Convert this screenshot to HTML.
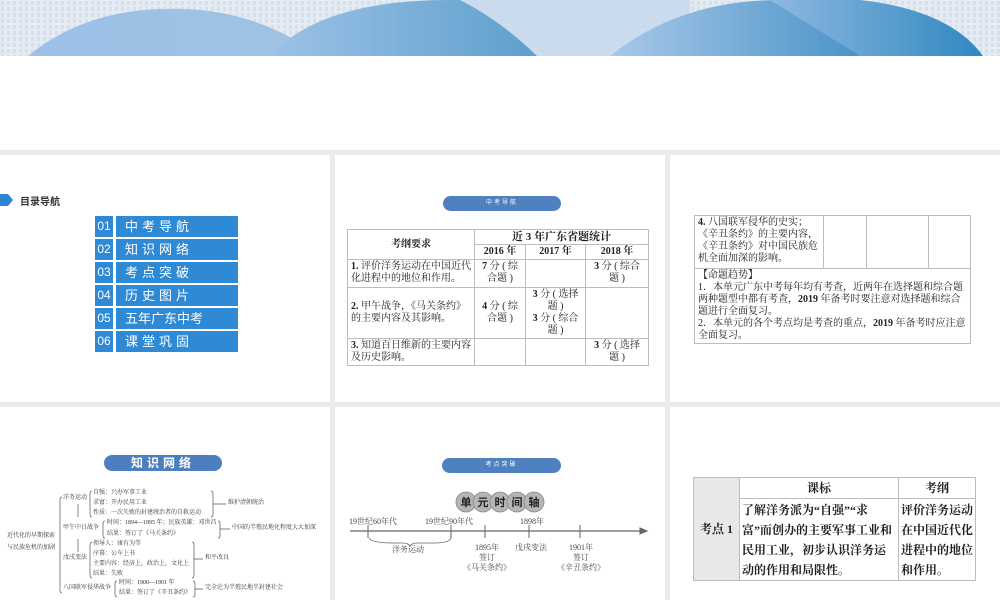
<!DOCTYPE html>
<html><head><meta charset="utf-8"><style>
*{margin:0;padding:0;box-sizing:border-box}
body{width:1000px;height:600px;overflow:hidden;background:#ebebeb;position:relative;font-family:"Liberation Serif","Noto Serif CJK SC",serif;color:#222}
.a{position:absolute}
.s{position:absolute;background:#fff;overflow:hidden}
.ss{font-family:"Liberation Sans","Noto Sans CJK SC",sans-serif}
.pill{position:absolute;background:#4f80bf;border-radius:8px;color:#fff;font-size:6px;text-align:center;font-family:"Liberation Sans","Noto Sans CJK SC",sans-serif;letter-spacing:2px}
table{border-collapse:collapse;table-layout:fixed}
td{border:1px solid #bdbdbd;vertical-align:top}
.t2 td{font-size:10px;line-height:12px;padding:1px 3px}
.t2 td.c{padding:1px 5px;text-align:center}
.mm span{position:absolute;font-size:6px;white-space:nowrap;line-height:7px;color:#333}
.tl{position:absolute;font-size:8px;color:#444;text-align:center;line-height:10px;white-space:nowrap}
</style></head><body>
<div class="a" style="left:0;top:0;width:1000px;height:150px;background:#fff"></div>
<svg class="a" style="left:0;top:0" width="1000" height="56" viewBox="0 0 1000 56">
<defs>
<pattern id="dp" width="6" height="6" patternUnits="userSpaceOnUse"><rect width="6" height="6" fill="#e4ebf3"/><rect x="1" y="1" width="3" height="4" fill="#d6e0ec"/></pattern>
<linearGradient id="g1" x1="0" x2="1"><stop offset="0" stop-color="#9cc0e6"/><stop offset="1" stop-color="#9ec3e4"/></linearGradient>
<linearGradient id="g2" x1="0" x2="1"><stop offset="0" stop-color="#9cc2e6"/><stop offset="1" stop-color="#5f9fcd"/></linearGradient>
<linearGradient id="g3" x1="0" x2="1"><stop offset="0" stop-color="#a9c8e8"/><stop offset="1" stop-color="#4a94c8"/></linearGradient>
<linearGradient id="g4" x1="0" x2="1"><stop offset="0" stop-color="#8fb8e0"/><stop offset="1" stop-color="#2f88c0"/></linearGradient>
</defs>
<rect width="1000" height="56" fill="url(#dp)"/>
<rect x="430" y="0" width="260" height="56" fill="#c5d8ee" opacity="0.8"/>
<path d="M28 56 Q90 5 185 9 Q260 12 320 56Z" fill="url(#g1)"/>
<path d="M270 56 Q320 0 450 0 L460 0 Q500 20 537 56Z" fill="url(#g2)"/>
<path d="M610 56 Q680 0 780 0 L860 56Z" fill="url(#g3)"/>
<path d="M770 0 L860 0 Q950 10 983 56 L860 56Z" fill="url(#g4)"/>
</svg>

<!-- slide 1 -->
<div class="s" style="left:0;top:155px;width:330px;height:247px">
<svg class="a" style="left:0;top:39px" width="14" height="12"><path d="M0 0H8L13 6L8 12H0Z" fill="#2e86d2"/></svg>
<div class="a ss" style="left:20px;top:38px;font-size:10px;font-weight:bold;color:#333">目录导航</div>
<div class="ss" style="position:absolute;left:95px;top:61px;color:#fff;font-size:13px">
<div class="a" style="top:0;left:0;width:18px;height:21px;background:#2f8ad6;line-height:21px;text-align:center;font-size:12px">01</div><div class="a" style="top:0;left:21px;width:122px;height:21px;background:#2f8ad6;line-height:21px;padding-left:9px;letter-spacing:4px">中考导航</div>
<div class="a" style="top:23px;left:0;width:18px;height:21px;background:#2f8ad6;line-height:21px;text-align:center;font-size:12px">02</div><div class="a" style="top:23px;left:21px;width:122px;height:21px;background:#2f8ad6;line-height:21px;padding-left:9px;letter-spacing:4px">知识网络</div>
<div class="a" style="top:46px;left:0;width:18px;height:21px;background:#2f8ad6;line-height:21px;text-align:center;font-size:12px">03</div><div class="a" style="top:46px;left:21px;width:122px;height:21px;background:#2f8ad6;line-height:21px;padding-left:9px;letter-spacing:4px">考点突破</div>
<div class="a" style="top:69px;left:0;width:18px;height:21px;background:#2f8ad6;line-height:21px;text-align:center;font-size:12px">04</div><div class="a" style="top:69px;left:21px;width:122px;height:21px;background:#2f8ad6;line-height:21px;padding-left:9px;letter-spacing:4px">历史图片</div>
<div class="a" style="top:92px;left:0;width:18px;height:21px;background:#2f8ad6;line-height:21px;text-align:center;font-size:12px">05</div><div class="a" style="top:92px;left:21px;width:122px;height:21px;background:#2f8ad6;line-height:21px;padding-left:9px">五年广东中考</div>
<div class="a" style="top:115px;left:0;width:18px;height:21px;background:#2f8ad6;line-height:21px;text-align:center;font-size:12px">06</div><div class="a" style="top:115px;left:21px;width:122px;height:21px;background:#2f8ad6;line-height:21px;padding-left:9px;letter-spacing:4px">课堂巩固</div>
</div>
</div>

<!-- slide 2 -->
<div class="s" style="left:335px;top:155px;width:330px;height:247px">
<div class="pill" style="left:108px;top:41px;width:118px;height:15px;line-height:15px">中考导航</div>
<table class="t2 a" style="left:12px;top:74px;width:302px">
<colgroup><col style="width:127px"><col style="width:51px"><col style="width:60px"><col></colgroup>
<tr style="height:14px"><td rowspan="2" style="text-align:center;vertical-align:middle;font-weight:bold">考纲要求</td><td colspan="3" style="text-align:center;font-weight:bold;font-size:11px">近 3 年广东省题统计</td></tr>
<tr style="height:15px"><td style="text-align:center;font-weight:bold">2016 年</td><td style="text-align:center;font-weight:bold">2017 年</td><td style="text-align:center;font-weight:bold">2018 年</td></tr>
<tr style="height:28px"><td><b>1.</b> 评价洋务运动在中国近代化进程中的地位和作用。</td><td class="c"><b>7</b> 分 ( 综合题 )</td><td></td><td class="c"><b>3</b> 分 ( 综合题 )</td></tr>
<tr style="height:50px"><td style="vertical-align:middle"><b>2.</b> 甲午战争，《马关条约》的主要内容及其影响。</td><td class="c" style="vertical-align:middle"><b>4</b> 分 ( 综合题 )</td><td class="c"><b>3</b> 分 ( 选择题 )<br><b>3</b> 分 ( 综合题 )</td><td></td></tr>
<tr style="height:27px"><td><b>3.</b> 知道百日维新的主要内容及历史影响。</td><td></td><td></td><td class="c"><b>3</b> 分 ( 选择题 )</td></tr>
</table>
</div>

<!-- slide 3 -->
<div class="s" style="left:670px;top:155px;width:330px;height:247px">
<table class="t2 a" style="left:24px;top:60px;width:277px">
<colgroup><col style="width:129px"><col style="width:43px"><col style="width:62px"><col></colgroup>
<tr style="height:53px"><td><b>4.</b> 八国联军侵华的史实；《辛丑条约》的主要内容，《辛丑条约》对中国民族危机全面加深的影响。</td><td></td><td></td><td></td></tr>
<tr style="height:75px"><td colspan="4">【命题趋势】<br>1．本单元广东中考每年均有考查，近两年在选择题和综合题两种题型中都有考查，<b>2019</b> 年备考时要注意对选择题和综合题进行全面复习。<br>2．本单元的各个考点均是考查的重点，<b>2019</b> 年备考时应注意全面复习。</td></tr>
</table>
</div>

<!-- slide 4 -->
<div class="s" style="left:0;top:407px;width:330px;height:193px">
<div class="pill" style="left:104px;top:48px;width:118px;height:16px;line-height:16px;font-size:12px;font-weight:bold;letter-spacing:4px;background:#4c7fc0">知识网络</div>
<div class="mm">
<span style="left:7px;top:126px">近代化的早期探索</span><span style="left:7px;top:138px">与民族危机的加剧</span>
<span style="left:63px;top:88px">洋务运动</span>
<span style="left:93px;top:83px">自强：兴办军事工业</span><span style="left:93px;top:93px">求富：开办民用工业</span><span style="left:93px;top:103px">性质：一次失败的封建统治者的自救运动</span>
<span style="left:228px;top:93px">维护清朝统治</span>
<span style="left:63px;top:118px">甲午中日战争</span>
<span style="left:107px;top:113px">时间：1894—1895 年；民族英雄：邓世昌</span><span style="left:107px;top:124px">结果：签订了《马关条约》</span>
<span style="left:232px;top:118px">中国的半殖民地化程度大大加深</span>
<span style="left:63px;top:148px">戊戌变法</span>
<span style="left:93px;top:134px">领导人：康有为等</span><span style="left:93px;top:144px">序幕：公车上书</span><span style="left:93px;top:154px">主要内容：经济上，政治上，文化上</span><span style="left:93px;top:164px">结果：失败</span>
<span style="left:205px;top:148px">和平改良</span>
<span style="left:63px;top:178px">八国联军侵华战争</span>
<span style="left:119px;top:173px">时间：1900—1901 年</span><span style="left:119px;top:183px">结果：签订了《辛丑条约》</span>
<span style="left:205px;top:178px">完全沦为半殖民地半封建社会</span>
</div>
<svg class="a" style="left:0;top:0" width="330" height="193" fill="none" stroke="#555" stroke-width="0.7">
<path d="M62 90 Q60 90 60 93 V183 Q60 186 62 186"/>
<path d="M92 84 Q90 84 90 87 V107 Q90 110 92 110"/>
<path d="M211 84 Q213 84 213 87 V107 Q213 110 211 110 M213 97H226"/>
<path d="M105 114 Q103 114 103 117 V129 Q103 131 105 131 M218 114 Q220 114 220 117V129Q220 131 218 131 M220 122H230"/>
<path d="M92 135 Q90 135 90 138 V168 Q90 171 92 171 M192 135Q194 135 194 138V168Q194 171 192 171 M194 152H203"/>
<path d="M117 174Q115 174 115 177V187Q115 190 117 190 M193 174Q195 174 195 177V187Q195 190 193 190 M195 182H203"/>
<path d="M78 97V110 M78 132V145"/>
</svg>
</div>

<!-- slide 5 -->
<div class="s" style="left:335px;top:407px;width:330px;height:193px">
<div class="pill" style="left:107px;top:51px;width:119px;height:15px;line-height:15px">考点突破</div>
<svg class="a" style="left:120px;top:84px" width="90" height="22">
<g fill="#b5b5b5" stroke="#888" stroke-width="0.8"><circle cx="11" cy="11" r="10"/><circle cx="28" cy="11" r="10"/><circle cx="45" cy="11" r="10"/><circle cx="62" cy="11" r="10"/><circle cx="79" cy="11" r="10"/></g>
<g font-size="11" font-weight="bold" fill="#222" text-anchor="middle" font-family="Noto Sans CJK SC,sans-serif"><text x="11" y="15">单</text><text x="28" y="15">元</text><text x="45" y="15">时</text><text x="62" y="15">间</text><text x="79" y="15">轴</text></g>
</svg>
<svg class="a" style="left:0;top:0" width="330" height="193" fill="none" stroke="#666">
<path d="M15 124H310" stroke-width="1.2"/><path d="M305 121L312 124L305 127Z" fill="#666"/>
<path d="M33 118V131 M116 118V131 M150 118V131 M194 118V131 M245 118V131"/>
<path d="M34 131 Q36 136 60 136 H68 Q73 136 75 139 Q77 136 82 136 H100 Q114 136 116 131" stroke-width="0.8"/>
</svg>
<div class="tl" style="left:14px;top:110px">19世纪60年代</div>
<div class="tl" style="left:90px;top:110px">19世纪90年代</div>
<div class="tl" style="left:185px;top:110px">1898年</div>
<div class="tl" style="left:57px;top:138px">洋务运动</div>
<div class="tl" style="left:128px;top:136px">1895年<br>签订<br>《马关条约》</div>
<div class="tl" style="left:180px;top:136px">戊戌变法</div>
<div class="tl" style="left:222px;top:136px">1901年<br>签订<br>《辛丑条约》</div>
</div>

<!-- slide 6 -->
<div class="s" style="left:670px;top:407px;width:330px;height:193px">
<table class="a" style="left:23px;top:70px;width:283px;font-size:12px;font-weight:bold;line-height:20px;color:#222">
<colgroup><col style="width:46px"><col style="width:159px"><col></colgroup>
<tr style="height:20px"><td rowspan="2" style="background:#e8e8e8;vertical-align:middle;text-align:center">考点 1</td><td style="text-align:center;padding:0">课标</td><td style="text-align:center;padding:0">考纲</td></tr>
<tr><td style="padding:1px 2px 0">了解洋务派为“自强”“求富”而创办的主要军事工业和民用工业，初步认识洋务运动的作用和局限性。</td><td style="padding:1px 2px 0">评价洋务运动在中国近代化进程中的地位和作用。</td></tr>
</table>
</div>
</body></html>
